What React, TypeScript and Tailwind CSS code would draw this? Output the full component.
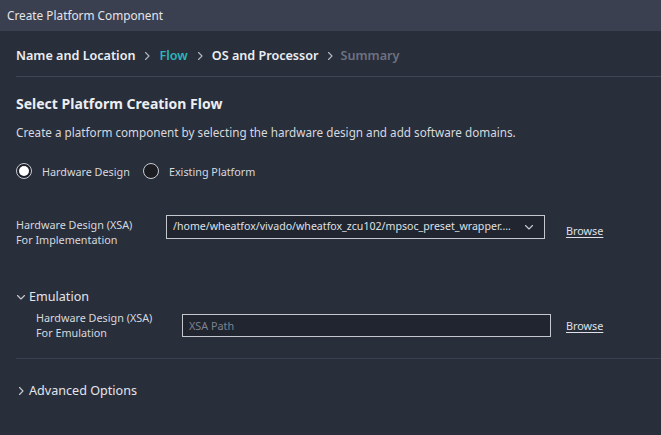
import { useState } from "react";

const font = { fontFamily: '"Noto Sans", "Open Sans", sans-serif' };

function Chevron({ dir = "right", className = "" }: { dir?: "right" | "down"; className?: string }) {
  return (
    <svg
      viewBox="0 0 10 10"
      className={className}
      fill="none"
      stroke="currentColor"
      strokeWidth="1.1"
      strokeLinecap="round"
      strokeLinejoin="round"
    >
      {dir === "right" ? <path d="M3.5 1.5 L7 5 L3.5 8.5" /> : <path d="M1.5 3.5 L5 7 L8.5 3.5" />}
    </svg>
  );
}

function Radio({ checked, label, onClick }: { checked: boolean; label: string; onClick: () => void }) {
  return (
    <button type="button" onClick={onClick} className="flex items-center gap-[10px]">
      <span
        className={
          "flex h-[16px] w-[16px] items-center justify-center rounded-full border border-[#c8cbd2] " +
          (checked ? "bg-[#1d2028]" : "bg-[#1b1d23]")
        }
      >
        {checked && <span className="h-[10px] w-[10px] rounded-full bg-white" />}
      </span>
      <span className="text-[10.8px] leading-[15px] text-[#d6d9df]">{label}</span>
    </button>
  );
}

export default function App() {
  const [flow, setFlow] = useState<"hw" | "existing">("hw");
  const [emulationOpen, setEmulationOpen] = useState(true);

  return (
    <div className="min-h-screen bg-[#292e3b] text-[#d6d9df]" style={font}>
      <div className="flex h-[31px] items-center bg-[#3b4050] px-[7px] text-[11.8px] text-[#e3e5ea]">
        Create Platform Component
      </div>

      <div className="pl-[16px]">
        <nav className="flex items-center pb-[11px] pt-[16px] text-[12.6px] font-semibold leading-[18px]">
          <span className="text-[#eceef2]">Name and Location</span>
          <Chevron className="mx-[7px] h-[10px] w-[10px] text-[#b5b8c0]" />
          <span className="text-[#2cb6bb]">Flow</span>
          <Chevron className="mx-[7px] h-[10px] w-[10px] text-[#b5b8c0]" />
          <span className="text-[#eceef2]">OS and Processor</span>
          <Chevron className="mx-[6px] h-[10px] w-[10px] text-[#b5b8c0]" />
          <span className="text-[#6d7282]">Summary</span>
        </nav>
        <div className="h-px bg-[#414656]" />

        <h1 className="mt-[17px] text-[14px] font-bold leading-[20px] text-[#eceef2]">
          Select Platform Creation Flow
        </h1>
        <p className="mt-[9px] text-[11.7px] leading-[18px]">
          Create a platform component by selecting the hardware design and add software domains.
        </p>

        <div className="mt-[22px] flex items-center gap-[13px]">
          <Radio checked={flow === "hw"} label="Hardware Design" onClick={() => setFlow("hw")} />
          <Radio checked={flow === "existing"} label="Existing Platform" onClick={() => setFlow("existing")} />
        </div>

        <div className="mt-[36px] flex items-start">
          <div className="w-[150px] pt-[2px] text-[10.8px] leading-[15px]">
            <div>Hardware Design (XSA)</div>
            <div>For Implementation</div>
          </div>
          <div className="flex h-[24px] w-[379px] items-center justify-between border border-[#c4c7ce] bg-[#21252f] pl-[6px] pr-[10px] text-[10.6px] text-[#dfe1e6]">
            <span className="overflow-hidden whitespace-nowrap">/home/wheatfox/vivado/wheatfox_zcu102/mpsoc_preset_wrapper....</span>
            <Chevron dir="down" className="ml-[4px] h-[10px] w-[10px] shrink-0 text-[#c8cbd2]" />
          </div>
          <a href="#" className="ml-[21px] mt-[8px] text-[10.8px] leading-[15px] text-[#dfe1e6] underline underline-offset-2">
            Browse
          </a>
        </div>

        <button
          type="button"
          onClick={() => setEmulationOpen(!emulationOpen)}
          className="mt-[41px] flex items-center text-[12.6px] leading-[18px] text-[#e3e5ea]"
        >
          <Chevron dir={emulationOpen ? "down" : "right"} className="mr-[3px] h-[10px] w-[10px] text-[#c8cbd2]" />
          Emulation
        </button>

        {emulationOpen && (
          <div className="mt-[4px] flex items-start pl-[20px]">
            <div className="w-[146px] text-[10.8px] leading-[15px]">
              <div>Hardware Design (XSA)</div>
              <div>For Emulation</div>
            </div>
            <input
              placeholder="XSA Path"
              className="mt-[4px] h-[23px] w-[369px] border border-[#c4c7ce] bg-[#21252f] px-[6px] text-[10.8px] text-[#dfe1e6] outline-none placeholder:text-[#7d8290]"
            />
            <a href="#" className="ml-[15px] mt-[8px] text-[10.8px] leading-[15px] text-[#dfe1e6] underline underline-offset-2">
              Browse
            </a>
          </div>
        )}

        <div className="mt-[18px] h-px bg-[#3b4050]" />

        <button type="button" className="mt-[23px] flex items-center text-[12.6px] leading-[18px] text-[#e3e5ea]">
          <Chevron className="mr-[3px] h-[10px] w-[10px] text-[#c8cbd2]" />
          Advanced Options
        </button>
      </div>
    </div>
  );
}
